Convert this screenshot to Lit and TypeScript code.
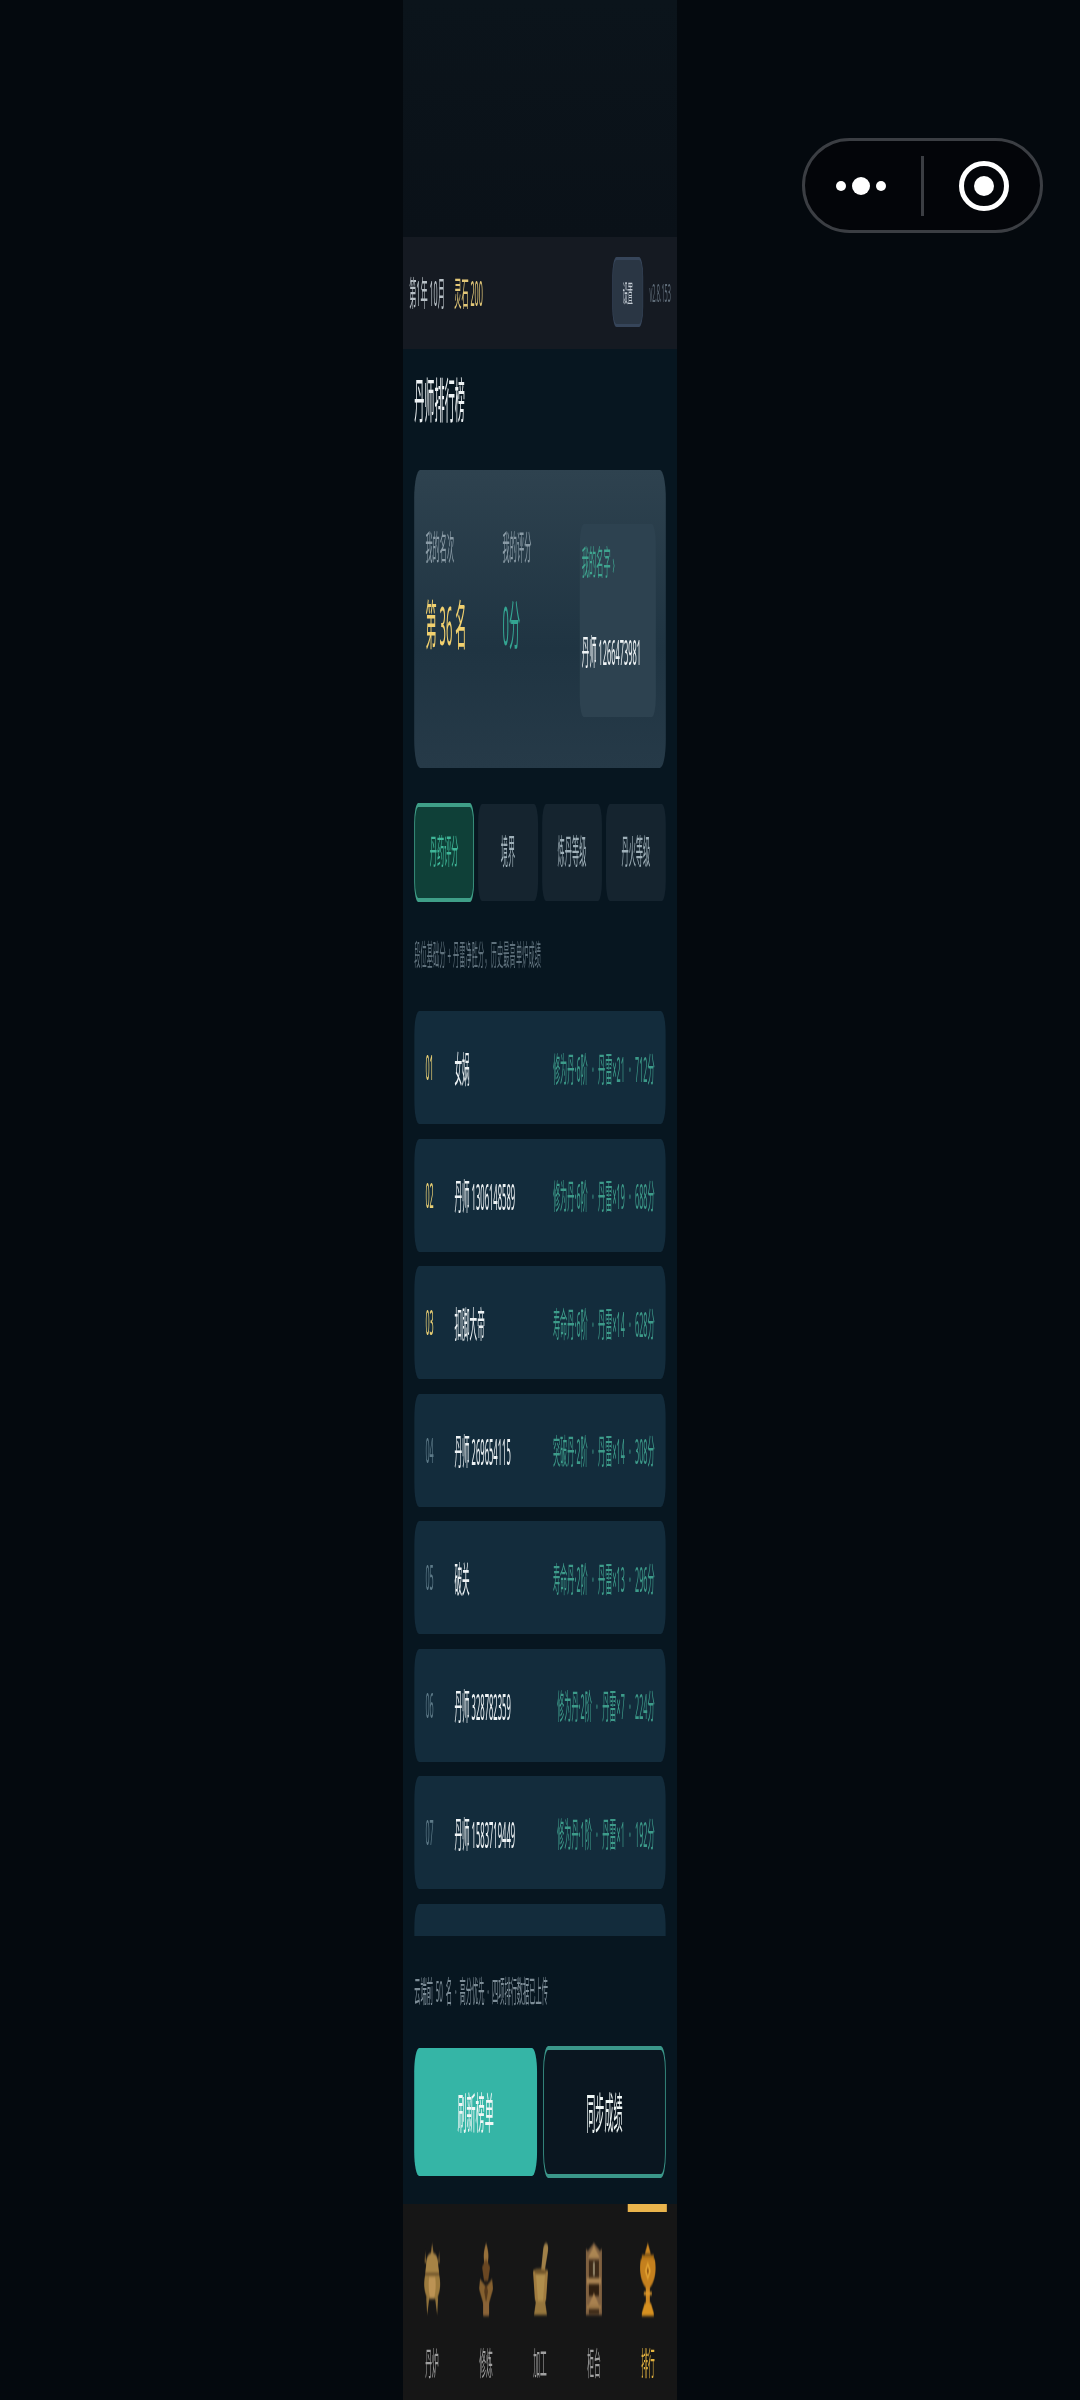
import { LitElement, html, css, svg } from "lit";
import { customElement } from "lit/decorators.js";

const rows = [
  ["01", "女娲", "修为丹·6阶", "丹雷×21", "712分"],
  ["02", "丹师 1306148589", "修为丹·6阶", "丹雷×19", "688分"],
  ["03", "扣脚大帝", "寿命丹·6阶", "丹雷×14", "628分"],
  ["04", "丹师 269654115", "突破丹·2阶", "丹雷×14", "308分"],
  ["05", "破关", "寿命丹·2阶", "丹雷×13", "296分"],
  ["06", "丹师 328782359", "修为丹·2阶", "丹雷×7", "224分"],
  ["07", "丹师 1583719449", "修为丹·1阶", "丹雷×1", "192分"],
  ["08", "", "", "", ""],
];

const icons = [
  svg`<path d="M15 0l1.600 12h-3.200z" fill="#8a6b38"/><path d="M8 8l1 12h-1.600zM22 8l-1 12h1.600z" fill="#7d6031"/>
      <path d="M15 10c4.500 0 6 6 6 12l1 8h-14l1-8c0-6 1.500-12 6-12z" fill="#a68345"/>
      <rect x="8" y="30" width="14" height="2" fill="#5d4423"/>
      <path d="M8 32h14c2 8 1 19-3 24h-8c-4-5-5-16-3-24z" fill="#9c7a3d"/>
      <path d="M12 34h6c1 7 .5 15-1 21h-4c-1.500-6-2-14-1-21z" fill="#bc9354"/>
      <path d="M9 54l3 2-2 16zM21 54l-3 2 2 16z" fill="#8f713b"/>`,
  svg`<path d="M15 0c2.500 8 3 14 1.500 20h-3c-1.500-6-1-12 1.500-20z" fill="#97703a"/>
      <path d="M15 16l4 8-2 14h-4l-2-14z" fill="#6a4722"/>
      <path d="M9 36l6 8 6-8 1 10-4 14h-6l-4-14z" fill="#85602f"/>
      <path d="M15 40l2 8-2 12-2-12z" fill="#573a1c"/>
      <rect x="12" y="58" width="6" height="15" rx="1" fill="#8a6337"/>`,
  svg`<path d="M21 0c2 1 2.500 3 2 8l-5 30h-3l3-30c.3-4 1-7 3-8z" fill="#a08048"/>
      <path d="M8 28c4-3 11-3 15 0l-2 30h-11z" fill="#a07c40"/>
      <ellipse cx="15.500" cy="29" rx="6" ry="2.500" fill="#6e5228"/>
      <path d="M11 31h9l-2 27h-5z" fill="#b08e4c"/>
      <path d="M11 58h9l2 14h-13z" fill="#96763d"/>`,
  svg`<path d="M15 0l6 8 2-2v66h-16v-66l2 2z" fill="#806140"/>
      <path d="M15 3l6 12h-12z" fill="#ab8552"/>
      <rect x="10" y="17" width="10" height="18" fill="#3d2a18"/>
      <rect x="14" y="19" width="2" height="14" fill="#8d8066"/>
      <rect x="8" y="35" width="14" height="6" fill="#a88250"/>
      <rect x="10" y="41" width="10" height="12" fill="#2f1f10"/>
      <path d="M15 50l5 12h-10z" fill="#a8814f"/>
      <rect x="8" y="62" width="14" height="4" fill="#9c7747"/>
      <rect x="10" y="66" width="10" height="5" fill="#3d2a18"/>`,
  svg`<path d="M15 0l3 11h-6z" fill="#cc8722"/>
      <path d="M9 12h12v4h-12z" fill="#b07116"/>
      <path d="M8 16h14c2 12 0 22-5 29h-4c-5-7-7-17-5-29z" fill="#c4801e"/>
      <path d="M15 19l3 9-3 9-3-9z" fill="#e6a532"/><path d="M15 24l1.200 4-1.200 4-1.200-4z" fill="#8c4f10"/>
      <rect x="13" y="45" width="4" height="16" fill="#cc8722"/>
      <rect x="11" y="49" width="8" height="3" fill="#e09b2c"/>
      <path d="M12 60h6l3 10v3h-12v-3z" fill="#d69020"/>`,
];

@customElement("app-root")
export class AppRoot extends LitElement {
  static styles = css`
    :host {
      display: block;
      position: relative;
      height: 2400px;
      background: #04090e;
      overflow: hidden;
      font-family: "Noto Sans", "Noto Sans CJK SC", "Liberation Sans", sans-serif;
    }
    .stage { display: flex; justify-content: center; }
    .phone { width: 274px; height: 2400px; overflow: hidden; flex: none; }
    .canvas {
      width: 1296px;
      height: 2400px;
      transform: scaleX(0.21142);
      transform-origin: 0 0;
      display: flex;
      flex-direction: column;
    }
    .top { height: 237px; flex: none; background: linear-gradient(#0b141b, #0a1118); }
    .bar {
      height: 112px;
      flex: none;
      display: flex;
      align-items: center;
      padding: 0 29px 3px;
      background: #151a22;
      font-size: 34px;
      color: #b8c0c6;
      box-sizing: border-box;
    }
    .date { margin-right: 44px; }
    .gold { color: #e3c878; }
    .spring { flex: 1; }
    .settings {
      width: 146px;
      height: 70px;
      border-radius: 20px;
      background: #2a3644;
      border: 3px solid #36455a;
      box-sizing: border-box;
      display: flex;
      align-items: center;
      justify-content: center;
      font-size: 24px;
      color: #c4ccd4;
    }
    .ver { margin-left: 29px; font-size: 26px; color: #5f6c78; }
    main {
      flex: 1;
      background: #071620;
      padding: 26px 53px 0;
      display: flex;
      flex-direction: column;
      min-height: 0;
    }
    h1 { margin: 0; font-size: 48px; line-height: 50px; font-weight: 400; color: #eef3f5; }
    .card {
      margin-top: 45px;
      height: 298px;
      flex: none;
      border-radius: 28px;
      background: linear-gradient(#2e424f, #1f3442 60%, #263a48);
      display: grid;
      grid-template-columns: 365px 365px 1fr;
      padding: 0 53px;
      box-sizing: border-box;
      align-items: start;
    }
    .stat { padding-top: 58px; }
    .lab { font-size: 34px; line-height: 38px; color: #8a9ba6; }
    .val { margin-top: 29px; font-size: 53px; line-height: 60px; }
    .val.rank { color: #f2d16f; }
    .val.score { color: #34a592; }
    .me {
      margin-top: 54px;
      height: 193px;
      box-sizing: border-box;
      padding: 19px 0 0 10px;
      border-radius: 20px;
      background: #2d4250;
      width: 360px;
    }
    .me .who { font-size: 34px; line-height: 38px; color: #3fa48f; }
    .me .nm { margin-top: 52px; font-size: 35px; line-height: 38px; color: #f0f4f6; white-space: nowrap; }
    .tabs {
      margin-top: 35px;
      display: grid;
      grid-template-columns: repeat(4, 1fr);
      gap: 19px;
      height: 99px;
      flex: none;
      align-items: center;
    }
    .tab {
      height: 97px;
      padding-bottom: 7px;
      box-sizing: border-box;
      border-radius: 20px;
      background: #15242f;
      display: flex;
      align-items: center;
      justify-content: center;
      font-size: 34px;
      color: #9fb0b9;
    }
    .tab.on {
      height: 99px;
      background: #0f4038;
      border: 4px solid #3f9f88;
      color: #3fb698;
    }
    .hint {
      margin-top: 38px;
      font-size: 29px;
      line-height: 30px;
      letter-spacing: 0.8px;
      color: #5f717c;
      white-space: nowrap;
    }
    .list {
      margin-top: 41px;
      height: 925px;
      flex: none;
      overflow: hidden;
      display: flex;
      flex-direction: column;
      gap: 14.5px;
    }
    .row {
      height: 113px;
      flex: none;
      border-radius: 24px;
      background: #132c3c;
      display: flex;
      align-items: center;
      padding: 0 53px 1px;
      box-sizing: border-box;
    }
    .no { width: 137px; flex: none; font-size: 34px; color: #5d7a88; }
    .no.top3 { color: #e9cf74; }
    .name { font-size: 36px; color: #eef3f5; white-space: nowrap; }
    .det { margin-left: auto; font-size: 34px; word-spacing: 11px; color: #3d9b8a; white-space: nowrap; }
    .foot {
      margin-top: 40px;
      font-size: 29.500px;
      line-height: 30px;
      word-spacing: 6px;
      color: #7d8d97;
      white-space: nowrap;
    }
    .btns {
      margin-top: 42px;
      height: 128px;
      flex: none;
      display: grid;
      grid-template-columns: 1fr 1fr;
      gap: 29px;
    }
    .btn {
      border-radius: 24px;
      display: flex;
      align-items: center;
      justify-content: center;
      padding-bottom: 3px;
      box-sizing: border-box;
      font-size: 43px;
      color: #f0f7f6;
    }
    .btn.pri { background: #35b5a6; }
    .btn.sec {
      margin: -2px 0;
      background: #0a1620;
      border: 4px solid #3b978a;
    }
    nav {
      height: 196px;
      flex: none;
      background: #161616;
      position: relative;
      display: grid;
      grid-template-columns: repeat(5, 1fr);
      padding: 0 10px;
      box-sizing: border-box;
    }
    .ind {
      position: absolute;
      top: 0;
      left: 1063px;
      width: 185px;
      height: 8px;
      background: #e9b44c;
    }
    .item {
      display: flex;
      flex-direction: column;
      align-items: center;
      padding-top: 39px;
      font-size: 32px;
      color: #a0a0a0;
    }
    .item.on { color: #e3b23f; }
    .item svg { width: 142px; height: 74px; display: block; filter: blur(1.800px); }
    .item span { margin-top: 28px; line-height: 36px; }
    .capsule {
      position: absolute;
      left: 802px;
      top: 138px;
      width: 241px;
      height: 95px;
      box-sizing: border-box;
      border: 3px solid #3b3e43;
      border-radius: 48px;
      background: #030509;
    }
    .capsule svg { position: absolute; left: -3px; top: -3px; }
  `;

  render() {
    return html`
      <div class="stage">
        <div class="phone">
          <div class="canvas">
            <div class="top"></div>
            <div class="bar">
              <span class="date">第1年 10月</span>
              <span class="gold">灵石 200</span>
              <span class="spring"></span>
              <span class="settings">设置</span>
              <span class="ver">v2.8.153</span>
            </div>
            <main>
              <h1>丹师排行榜</h1>
              <div class="card">
                <div class="stat">
                  <div class="lab">我的名次</div>
                  <div class="val rank">第 36 名</div>
                </div>
                <div class="stat">
                  <div class="lab">我的评分</div>
                  <div class="val score">0分</div>
                </div>
                <div class="me">
                  <div class="who">我的名字 ›</div>
                  <div class="nm">丹师 1266473981</div>
                </div>
              </div>
              <div class="tabs">
                <div class="tab on">丹药评分</div>
                <div class="tab">境界</div>
                <div class="tab">炼丹等级</div>
                <div class="tab">丹火等级</div>
              </div>
              <div class="hint">段位基础分 + 丹雷净胜分，历史最高单炉成绩</div>
              <div class="list">
                ${rows.map(
                  (r, i) => html`<div class="row">
                    ${r[1]
                      ? html`<span class="no ${i < 3 ? "top3" : ""}">${r[0]}</span>
                          <span class="name">${r[1]}</span>
                          <span class="det">${r[2]} · ${r[3]} · ${r[4]}</span>`
                      : ""}
                  </div>`
                )}
              </div>
              <div class="foot">云端前 50 名 · 高分优先 · 四项排行数据已上传</div>
              <div class="btns">
                <div class="btn pri">刷新榜单</div>
                <div class="btn sec">同步成绩</div>
              </div>
            </main>
            <nav>
              <div class="ind"></div>
              ${["丹炉", "修炼", "加工", "柜台", "排行"].map(
                (t, i) => html`<div class="item ${i === 4 ? "on" : ""}">
                  <svg viewBox="0 0 30 74" preserveAspectRatio="none">${icons[i]}</svg>
                  <span>${t}</span>
                </div>`
              )}
            </nav>
          </div>
        </div>
      </div>
      <div class="capsule">
        <svg width="241" height="95" viewBox="0 0 241 95">
          <circle cx="39" cy="48" r="5" fill="#fff" />
          <circle cx="59" cy="48" r="9" fill="#fff" />
          <circle cx="79" cy="48" r="5" fill="#fff" />
          <rect x="119" y="18" width="3" height="60" fill="#3b3e43" />
          <circle cx="182" cy="48" r="22.500" fill="none" stroke="#fff" stroke-width="5" />
          <circle cx="182" cy="48" r="10" fill="#fff" />
        </svg>
      </div>
    `;
  }
}
